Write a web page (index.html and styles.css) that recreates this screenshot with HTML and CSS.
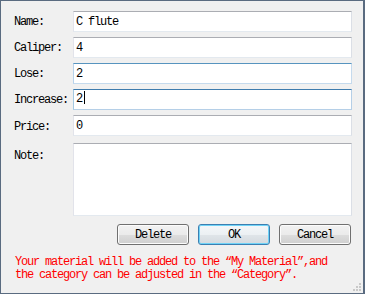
FILE: index.html
```html
<!DOCTYPE html>
<html lang="en">

<head>
    <meta charset="UTF-8">
    <meta name="viewport" content="width=device-width, initial-scale=1.0">
    <title>Material</title>
    <link rel="stylesheet" href="styles.css">
</head>

<body>

    <div class="dialog">
        <form class="fields">
            <label class="field-label" for="name">Name:</label>
            <input class="field" id="name" type="text" value="C flute">

            <label class="field-label" for="caliper">Caliper:</label>
            <input class="field" id="caliper" type="text" value="4">

            <label class="field-label" for="lose">Lose:</label>
            <input class="field hot" id="lose" type="text" value="2">

            <label class="field-label" for="increase">Increase:</label>
            <div class="field active">2<span class="caret"></span></div>

            <label class="field-label low" for="price">Price:</label>
            <input class="field low" id="price" type="text" value="0">

            <label class="field-label note-label" for="note">Note:</label>
            <textarea class="field note" id="note"></textarea>
        </form>

        <div class="actions">
            <button type="button" class="btn">Delete</button>
            <button type="button" class="btn default">OK</button>
            <button type="button" class="btn">Cancel</button>
        </div>

        <p class="hint">Your material will be added to the “My Material”,and<br>the category can be adjusted in the “Category”.</p>

        <svg class="grip" width="10" height="10" viewBox="0 0 10 10">
            <rect x="7" y="1" width="2" height="2" fill="#c8c8c8" />
            <rect x="4" y="4" width="2" height="2" fill="#c8c8c8" />
            <rect x="7" y="4" width="2" height="2" fill="#c8c8c8" />
            <rect x="1" y="7" width="2" height="2" fill="#c8c8c8" />
            <rect x="4" y="7" width="2" height="2" fill="#c8c8c8" />
            <rect x="7" y="7" width="2" height="2" fill="#c8c8c8" />
        </svg>
    </div>

</body>

</html>
```

FILE: styles.css
```css
body {
    margin: 0;
    font-family: 'Liberation Mono', 'DejaVu Sans Mono', monospace;
    font-size: 12px;
    letter-spacing: -1.2px;
}

.dialog {
    position: relative;
    box-sizing: border-box;
    width: 365px;
    height: 294px;
    padding: 10px 11px 0 13px;
    background: #f0f0f0;
    border-top: 1px solid #5a6b80;
    border-left: 1px solid #5a6b80;
    border-right: 2px solid #5a6b80;
    border-bottom: 1px solid #5a6b80;
}

.fields {
    display: grid;
    grid-template-columns: 59px 279px;
    row-gap: 5px;
    margin: 0;
}

.field-label {
    display: flex;
    align-items: center;
    color: #000;
}

.low {
    margin-top: 2px;
}

.note-label {
    align-items: flex-start;
    padding-top: 8px;
}

.field {
    box-sizing: border-box;
    height: 21px;
    margin: 0;
    padding: 0 2px;
    font-family: inherit;
    font-size: 12px;
    letter-spacing: -1.2px;
    line-height: 19px;
    color: #000;
    background: #fff;
    border: 1px solid;
    border-color: #abadb3 #dbdfe6 #e3e9ef #e2e3ea;
    outline: none;
}

.field.hot {
    border-color: #5794bf #c5daed #c5daed #b7d2eb;
}

.field.active {
    border-color: #3d7bad #b5cfe7 #b5cfe7 #a4c9e3;
}

.caret {
    display: inline-block;
    width: 1px;
    height: 13px;
    margin-left: 2px;
    vertical-align: -2px;
    background: #000;
}

.note {
    height: 73px;
    margin-top: 2px;
    resize: none;
}

.actions {
    display: flex;
    justify-content: flex-end;
    gap: 9px;
    margin-top: 8px;
    padding-right: 1px;
}

.btn {
    box-sizing: border-box;
    width: 72px;
    height: 21px;
    padding: 0;
    font-family: inherit;
    font-size: 12px;
    letter-spacing: -1.2px;
    color: #000;
    border: 1px solid #707070;
    border-radius: 3px;
    background: linear-gradient(#f2f2f2 0%, #ebebeb 50%, #dddddd 51%, #cfcfcf 100%);
    box-shadow: inset 0 0 0 1px #fcfcfc;
}

.btn.default {
    border-color: #3c7fb1;
    background: linear-gradient(#f4f7f9 0%, #ecf0f3 50%, #e0e5e9 51%, #d4dadf 100%);
    box-shadow: inset 0 0 0 1px #6fd3f7;
}

.hint {
    margin: 11px 0 0 1px;
    color: #ff0000;
    line-height: 13px;
}

.grip {
    position: absolute;
    right: 1px;
    bottom: 1px;
}
```
